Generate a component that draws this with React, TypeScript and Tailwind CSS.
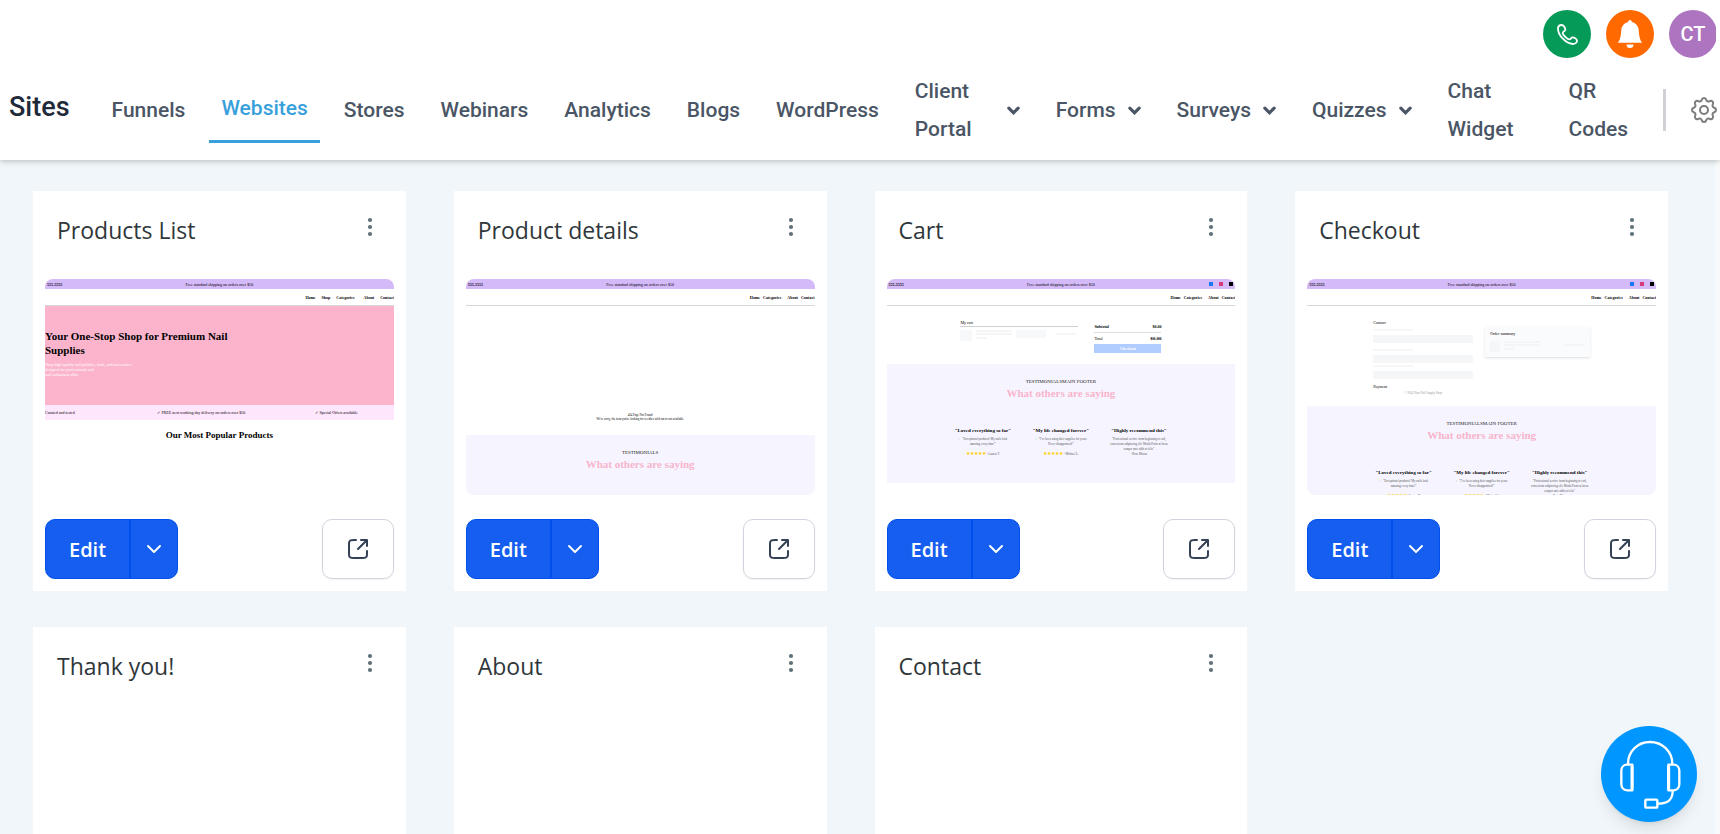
import type { ReactNode } from 'react'
import { BsBellFill } from 'react-icons/bs'

interface NavItem {
  label: string
  active?: boolean
  menu?: boolean
  width?: string
}

const NAV_ITEMS: NavItem[] = [
  { label: 'Funnels' },
  { label: 'Websites', active: true },
  { label: 'Stores' },
  { label: 'Webinars' },
  { label: 'Analytics' },
  { label: 'Blogs' },
  { label: 'WordPress' },
  { label: 'Client Portal', menu: true, width: 'w-20' },
  { label: 'Forms', menu: true },
  { label: 'Surveys', menu: true },
  { label: 'Quizzes', menu: true },
  { label: 'Chat Widget', width: 'w-[85px]' },
  { label: 'QR Codes', width: 'w-[70px]' },
]

const TESTIMONIALS = [
  {
    title: '"Loved everything so far"',
    lines: ['"Exceptional products! My nails look', 'amazing every time!"'],
    author: 'Lauren T.',
  },
  {
    title: '"My life changed forever"',
    lines: ['"I’ve been using their supplies for years.', 'Never disappointed!"'],
    author: 'Michael L.',
  },
  {
    title: '"Highly recommend this"',
    lines: ['"Professional service from beginning to end,', 'consectetur adipiscing elit. Morbi Proin at lacus', 'semper ante nibh at felis"', '- Rose Moran'],
  },
]

/* ---------- icons ---------- */

function PhoneIcon() {
  return (
    <svg viewBox="0 0 63 63" className="h-[21px] w-[21px]" fill="none" stroke="currentColor" strokeWidth="5.5" strokeLinejoin="round">
      <path d="M14 3C20 3 25 12 25 17C25 22 17 22 17 27C17 33 31 46 37 46C42 46 42 40 47 40C52 40 60 45 60 50C60 56 54 60 47 60C27 59 3 34 3 14C3 7 8 3 14 3Z" />
    </svg>
  )
}

function GearIcon() {
  return (
    <svg viewBox="0 0 24 24" className="h-8 w-8" fill="none" stroke="currentColor" strokeWidth="1.5" strokeLinecap="round" strokeLinejoin="round">
      <path d="M10.325 4.317c.426-1.756 2.924-1.756 3.35 0a1.724 1.724 0 002.573 1.066c1.543-.94 3.31.826 2.37 2.37a1.724 1.724 0 001.065 2.572c1.756.426 1.756 2.924 0 3.35a1.724 1.724 0 00-1.066 2.573c.94 1.543-.826 3.31-2.37 2.37a1.724 1.724 0 00-2.572 1.065c-.426 1.756-2.924 1.756-3.35 0a1.724 1.724 0 00-2.573-1.066c-1.543.94-3.31-.826-2.37-2.37a1.724 1.724 0 00-1.065-2.572c-1.756-.426-1.756-2.924 0-3.35a1.724 1.724 0 001.066-2.573c-.94-1.543.826-3.31 2.37-2.37.996.608 2.296.07 2.572-1.065z" />
      <circle cx="12" cy="12" r="3" />
    </svg>
  )
}

function CaretIcon() {
  return (
    <svg viewBox="0 0 14 9" className="h-[9px] w-[13px] shrink-0" fill="none" stroke="currentColor" strokeWidth="3.4" strokeLinecap="round">
      <path d="M2 2l5 5 5-5" />
    </svg>
  )
}

function ChevronIcon() {
  return (
    <svg viewBox="0 0 24 24" className="h-6 w-6" fill="none" stroke="currentColor" strokeWidth="2" strokeLinecap="round" strokeLinejoin="round">
      <path d="M6 9l6 6 6-6" />
    </svg>
  )
}

function OpenIcon() {
  return (
    <svg viewBox="0 0 24 24" className="h-6 w-6" fill="none" stroke="currentColor" strokeWidth="2" strokeLinecap="round" strokeLinejoin="round">
      <path d="M21 9V3M21 3H15M21 3L12 12M10 3H7.8C6.12 3 5.28 3 4.64 3.33C4.07 3.61 3.61 4.07 3.33 4.64C3 5.28 3 6.12 3 7.8V16.2C3 17.88 3 18.72 3.33 19.36C3.61 19.93 4.07 20.39 4.64 20.67C5.28 21 6.12 21 7.8 21H16.2C17.88 21 18.72 21 19.36 20.67C19.93 20.39 20.39 19.93 20.67 19.36C21 18.72 21 17.88 21 16.2V14" />
    </svg>
  )
}

function HeadsetIcon() {
  return (
    <svg viewBox="0 0 288 288" className="h-24 w-24" fill="none" stroke="currentColor" strokeWidth="7" strokeLinejoin="round">
      <path d="M81 114C81 75 111 48 147 48S214 75 214 114" />
      <path d="M94 116V193H78C68 193 61 185 61 175V134C61 124 68 116 78 116Z" />
      <path d="M202 116V193H218C228 193 235 185 235 175V134C235 124 228 116 218 116Z" />
      <path d="M93 120V190M203 120V190" strokeWidth="9" />
      <path d="M215 194C215 222 201 233 170 233" />
      <rect x="133" y="221" width="36" height="24" rx="3" />
    </svg>
  )
}

/* ---------- page previews ---------- */

function SiteHeader({ links, social, gap = 'gap-[3px]' }: { links: string[]; social?: boolean; gap?: string }) {
  return (
    <>
      <div className="flex h-2.5 items-center justify-between bg-[#d5bafa] px-0.5 text-black">
        <span className="flex-1 font-bold">555-5555</span>
        <span>Free standard shipping on orders over $50</span>
        <span className="flex flex-1 justify-end gap-1.5">
          {social && (
            <>
              <i className="h-1 w-1 bg-[#1877f2]" />
              <i className="h-1 w-1 bg-[#d63a78]" />
              <i className="h-1 w-1 bg-black" />
            </>
          )}
        </span>
      </div>
      <div className={`flex h-[17px] items-center justify-end border-b border-[#d6d7da] font-bold text-black ${gap}`}>
        {links.map((link) => (
          <span key={link} className={link === 'Categories' ? 'mr-[3px]' : ''}>{link}</span>
        ))}
      </div>
    </>
  )
}

function Testimonials({ label, quotes, className }: { label: string; quotes?: boolean; className: string }) {
  return (
    <div className={`bg-[#f6f5ff] pt-[15px] text-center ${className}`}>
      <p className="text-[5px] leading-[5px] text-[#222]">{label}</p>
      <p className="mt-0.5 text-[11px] leading-[14px] font-bold text-[#f8b4cc]">What others are saying</p>
      {quotes && (
        <div className="mx-auto mt-7 grid w-[234px] grid-cols-3 text-[3px] text-[#555]">
          {TESTIMONIALS.map((t) => (
            <div key={t.title}>
              <p className="mb-[3px] text-[5px] leading-[6px] font-bold whitespace-nowrap text-black">{t.title}</p>
              {t.lines.map((line, i) => (
                <p key={line}>
                  {i === 0 && t.author && <span className="text-[#8fd3b0]">✓ </span>}
                  {line}
                </p>
              ))}
              {t.author && (
                <p className="mt-1">
                  <span className="text-[5px] text-[#ffcf0d]">★★★★★</span> - {t.author}
                </p>
              )}
            </div>
          ))}
        </div>
      )}
    </div>
  )
}

function SkeletonLines() {
  return (
    <div className="flex w-9 flex-col gap-px">
      <i className="h-0.5 bg-[#f4f5f7]" />
      <i className="h-0.5 bg-[#f4f5f7]" />
      <i className="mt-px h-0.5 w-2.5 bg-[#f4f5f7]" />
    </div>
  )
}

function ProductsPreview() {
  return (
    <>
      <SiteHeader links={['Home', 'Shop', 'Categories', 'About', 'Contact']} gap="gap-1.5" />
      <div className="h-[99px] bg-[#fbb4cc] pt-[23px]">
        <p className="w-[190px] text-[11px] leading-[14px] font-bold text-black">Your One-Stop Shop for Premium Nail Supplies</p>
        <p className="mt-[5px] text-white">
          Shop high-quality nail polishes, tools, and accessories
          <br />
          designed for professionals and
          <br />
          nail enthusiasts alike.
        </p>
      </div>
      <div className="flex h-[15px] items-center bg-[#fee6fc] text-black">
        <span className="flex-1">Curated and tested</span>
        <span>✓ FREE next working day delivery on orders over $50</span>
        <span className="flex-1 pr-9 text-right">✓ Special Offers available</span>
      </div>
      <p className="mt-[9px] text-center text-[9px] leading-3 font-bold text-black">Our Most Popular Products</p>
    </>
  )
}

function DetailsPreview() {
  return (
    <>
      <SiteHeader links={['Home', 'Categories', 'About', 'Contact']} />
      <div className="flex h-[129px] flex-col justify-end pb-3.5 text-center text-[3px] leading-[4px] text-black">
        <p>404 Page Not Found</p>
        <p>We're sorry, the item you're looking for is either sold out or not available</p>
      </div>
      <Testimonials label="TESTIMONIALS" className="h-[60px]" />
    </>
  )
}

function CartPreview() {
  return (
    <>
      <SiteHeader links={['Home', 'Categories', 'About', 'Contact']} social />
      <div className="flex h-[58px] justify-center gap-4 pt-3.5 text-black">
        <div className="w-[118px]">
          <p>My cart</p>
          <div className="mt-px flex gap-1 border-t border-[#cfd0d3] pt-[3px]">
            <i className="h-[11px] w-3 bg-[#f7f8f9]" />
            <SkeletonLines />
            <i className="h-2 w-[30px] bg-[#f7f8f9]" />
            <i className="mt-[3px] ml-1.5 h-0.5 w-5 bg-[#f4f5f7]" />
          </div>
        </div>
        <div className="w-[67px] pt-1">
          <p className="flex justify-between border-b border-[#dddee0] pb-[3px] font-bold">
            <span>Subtotal</span>
            <span>$0.00</span>
          </p>
          <p className="flex justify-between py-[3px]">
            <span>Total</span>
            <span className="text-[5px] font-bold">$0.00</span>
          </p>
          <p className="h-[9px] bg-[#b1ccfe] pt-0.5 text-center font-bold text-white">Checkout</p>
        </div>
      </div>
      <Testimonials label="TESTIMONIALSMAIN FOOTER" quotes className="h-[119px]" />
    </>
  )
}

function CheckoutPreview() {
  return (
    <>
      <SiteHeader links={['Home', 'Categories', 'About', 'Contact']} social />
      <div className="flex h-[100px] items-start justify-center gap-3 pt-3.5 text-black">
        <div className="flex w-[100px] flex-col">
          <p>Contact</p>
          <i className="mt-1 h-0.5 w-10 bg-[#f7f7f8]" />
          <i className="mt-1 h-2 bg-[#f5f6f8]" />
          <i className="mt-1.5 h-0.5 w-10 bg-[#f7f7f8]" />
          <i className="mt-1 h-2 bg-[#f5f6f8]" />
          <i className="mt-0.5 h-0.5 w-10 bg-[#f7f7f8]" />
          <i className="mt-1 h-2 bg-[#f5f6f8]" />
          <p className="mt-[5px]">Payment</p>
          <p className="mt-0.5 text-center text-[3px] text-[#999]">© 2024 Your Nail Supply Shop</p>
        </div>
        <div className="mt-[7px] h-[30px] w-[105px] bg-[#fafbfc] px-[5px] pt-1 shadow-sm">
          <p>Order summary</p>
          <div className="mt-[5px] flex gap-1">
            <i className="h-[11px] w-2.5 bg-[#f5f6f8]" />
            <SkeletonLines />
            <i className="mt-[3px] ml-auto h-0.5 w-5 bg-[#f4f5f7]" />
          </div>
        </div>
      </div>
      <Testimonials label="TESTIMONIALSMAIN FOOTER" quotes className="h-[89px]" />
    </>
  )
}

/* ---------- dashboard ---------- */

interface Page {
  name: string
  preview?: ReactNode
}

const PAGES: Page[] = [
  { name: 'Products List', preview: <ProductsPreview /> },
  { name: 'Product details', preview: <DetailsPreview /> },
  { name: 'Cart', preview: <CartPreview /> },
  { name: 'Checkout', preview: <CheckoutPreview /> },
  { name: 'Thank you!' },
  { name: 'About' },
  { name: 'Contact' },
]

function PageCard({ name, preview }: Page) {
  return (
    <article className="min-h-[400px] bg-white p-3">
      <div className="flex h-[76px] items-start justify-between px-3 pt-3">
        <h2 className="text-[23px] leading-[30px] text-[#2f373b]">{name}</h2>
        <button type="button" aria-label={`${name} options`} className="text-[#607179]">
          <svg viewBox="0 0 24 24" className="h-6 w-6" fill="currentColor">
            <circle cx="12" cy="5" r="2.1" />
            <circle cx="12" cy="12" r="2.1" />
            <circle cx="12" cy="19" r="2.1" />
          </svg>
        </button>
      </div>
      {preview && (
        <>
          <div className="h-[216px] overflow-hidden rounded-lg font-['Liberation_Serif',serif] text-[4px] leading-[5px]">{preview}</div>
          <div className="mt-6 flex h-15 justify-between">
            <div className="flex overflow-hidden rounded-[10px] border border-[#004eeb] bg-[#155eef] text-white">
              <button type="button" className="border-r-2 border-[#004eeb] px-[23px] pt-0.5 text-xl font-semibold">Edit</button>
              <button type="button" aria-label="More edit options" className="px-[11px]">
                <ChevronIcon />
              </button>
            </div>
            <button type="button" aria-label={`Open ${name}`} className="flex w-18 items-center justify-center rounded-[10px] border border-[#d0d5dd] text-[#344054] shadow-xs">
              <OpenIcon />
            </button>
          </div>
        </>
      )}
    </article>
  )
}

export default function App() {
  return (
    <div className="flex h-screen flex-col overflow-hidden bg-[#f0f6f9] font-['Open_Sans','Noto_Sans',sans-serif]">
      <header className="z-10 bg-white font-['Roboto',sans-serif] shadow-[0_1px_6px_rgba(0,0,0,0.25)]">
        <div className="mr-1 flex h-15 justify-end gap-[15px] overflow-hidden pt-2.5">
          <button type="button" aria-label="Call" className="flex h-12 w-12 items-center justify-center rounded-full bg-[#059a58] text-white">
            <PhoneIcon />
          </button>
          <button type="button" aria-label="Notifications" className="flex h-12 w-12 items-center justify-center rounded-full bg-[#ff6900] text-white">
            <BsBellFill className="h-7 w-7" />
          </button>
          <button type="button" className="-mr-px flex h-12 w-12 items-center justify-center rounded-full bg-[#ad75bf] text-xl font-medium text-white">CT</button>
        </div>

        <div className="flex h-25 items-center pl-[9px]">
          <h1 className="mr-[30px] pb-1.5 text-[27px] font-medium text-gray-800">Sites</h1>
          <nav className="flex flex-1 items-center gap-3">
            {NAV_ITEMS.map(({ label, active, menu, width }) => (
              <a
                key={label}
                href="#"
                className={`flex items-center gap-3 px-3 text-[21px] leading-[38px] font-medium ${
                  active ? 'border-b-3 border-[#38a0db] pt-[11px] pb-[13px] text-[#38a0db]' : 'text-gray-600'
                }`}
              >
                <span className={width ?? 'whitespace-nowrap'}>{label}</span>
                {menu && <CaretIcon />}
              </a>
            ))}
          </nav>
          <div className="mr-[22px] h-[42px] w-[3px] bg-[#d0d1d7]" />
          <button type="button" aria-label="Settings" className="text-[#7b7b7b]">
            <GearIcon />
          </button>
        </div>
      </header>

      <main className="flex min-h-0 flex-1 overflow-hidden">
        <section className="grid flex-1 auto-rows-max grid-cols-4 gap-x-12 gap-y-9 pt-[31px] pr-[47px] pl-[33px]">
          {PAGES.map((page) => (
            <PageCard key={page.name} {...page} />
          ))}
        </section>
        <div className="w-[5px] bg-[#f8f9fa]" />
      </main>

      <button type="button" aria-label="Support" className="fixed right-[23px] bottom-3 z-20 rounded-full bg-[#0096ff] text-white shadow-lg">
        <HeadsetIcon />
      </button>
    </div>
  )
}
